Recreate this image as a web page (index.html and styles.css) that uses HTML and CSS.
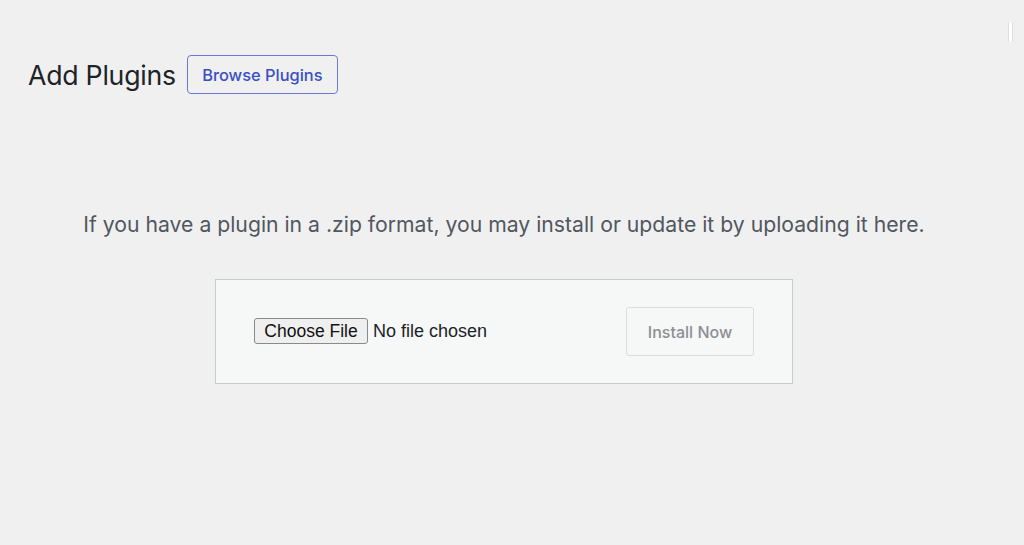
FILE: index.html
```html
<!DOCTYPE html>
<html lang="en">
<head>
<meta charset="utf-8">
<title>Add Plugins</title>
<link rel="stylesheet" href="styles.css">
</head>
<body>
<div class="scroll-thumb"></div>
<main class="wrap">
  <header class="page-header">
    <h1 class="page-title">Add Plugins</h1>
    <a class="title-action" href="#">Browse Plugins</a>
  </header>
  <section class="upload">
    <p class="install-help">If you have a plugin in a .zip format, you may install or update it by uploading it here.</p>
    <form class="upload-form">
      <div class="file-field">
        <button type="button" class="choose-btn">Choose File</button>
        <span class="file-status">No file chosen</span>
      </div>
      <button type="button" class="install-btn" disabled>Install Now</button>
    </form>
  </section>
</main>
</body>
</html>
```

FILE: styles.css
```css
html, body {
  margin: 0;
  padding: 0;
  background: #f0f0f1;
  height: 100%;
}
body {
  font-family: Inter, "Noto Sans", "Liberation Sans", sans-serif;
  color: #1d2327;
  overflow: hidden;
}
.wrap {
  width: 1008px;
  box-sizing: border-box;
  padding: 55px 0 0 28px;
}
.page-header {
  display: flex;
  align-items: center;
  gap: 11px;
}
.page-title {
  margin: 0;
  font-size: 26.7px;
  font-weight: 400;
  letter-spacing: -0.25px;
  color: #1d2327;
}
.title-action {
  display: inline-flex;
  align-items: center;
  justify-content: center;
  box-sizing: border-box;
  width: 151px;
  height: 39px;
  border: 1.5px solid #6c78d6;
  border-radius: 4px;
  color: #3b4fc4;
  text-decoration: none;
  font-size: 16.4px;
  font-weight: 500;
}
.upload {
  display: flex;
  flex-direction: column;
  align-items: center;
  margin-left: -28px;
}
.install-help {
  margin: 116px 0 0;
  font-size: 21.2px;
  color: #50575e;
  line-height: 28px;
}
.upload-form {
  margin-top: 41px;
  width: 578px;
  height: 105px;
  box-sizing: border-box;
  border: 1.5px solid #c9cacd;
  background: #f6f7f7;
  display: flex;
  align-items: center;
  justify-content: space-between;
  padding: 0 38px 0 38px;
}
.file-field {
  display: flex;
  align-items: center;
  gap: 5px;
  margin-top: -1px;
}
.choose-btn {
  box-sizing: border-box;
  width: 114px;
  height: 26px;
  padding: 0;
  border: 1px solid #8a8a8a;
  border-radius: 3px;
  background: #efefef;
  font-family: "Liberation Sans", Arial, sans-serif;
  font-size: 17.5px;
  color: #111;
}
.file-status {
  font-family: "Liberation Sans", Arial, sans-serif;
  font-size: 18px;
  color: #1d2327;
}
.install-btn {
  box-sizing: border-box;
  width: 128px;
  height: 49px;
  border: 1.5px solid #dcdcde;
  border-radius: 3px;
  background: #f6f7f7;
  color: #8c8f94;
  font-family: Inter, "Noto Sans", sans-serif;
  font-size: 16px;
  font-weight: 500;
}
.scroll-thumb {
  position: absolute;
  left: 1008px;
  top: 22px;
  width: 3px;
  height: 20px;
  background: #fff;
  border-left: 1px solid #dedede;
  border-right: 1px solid #dedede;
  border-radius: 2px;
}
```
